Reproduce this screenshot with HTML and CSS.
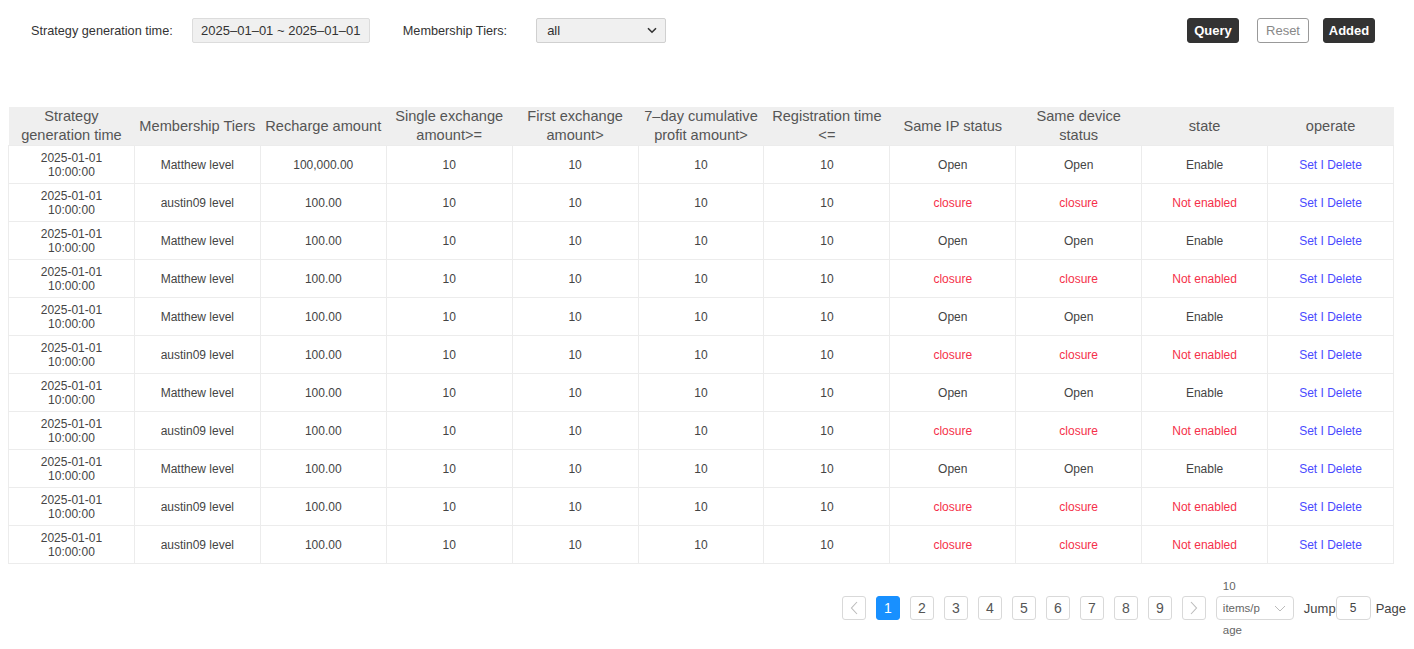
FILE: index.html
```html
<!DOCTYPE html>
<html>
<head>
<meta charset="utf-8">
<link rel="stylesheet" href="styles.css">
</head>
<body>
<div class="toolbar">
  <div class="filters">
    <span class="label first">Strategy generation time:</span>
    <div class="date-input">2025–01–01 ~ 2025–01–01</div>
    <span class="label second">Membership Tiers:</span>
    <div class="select">
      <span>all</span>
      <svg width="10" height="7" viewBox="0 0 10 7"><path d="M1 1.2 L5 5.2 L9 1.2" fill="none" stroke="#333" stroke-width="1.6"/></svg>
    </div>
  </div>
  <div class="actions">
    <button class="btn dark">Query</button>
    <button class="btn light">Reset</button>
    <button class="btn dark added">Added</button>
  </div>
</div>

<table class="grid">
  <thead>
    <tr>
      <th>Strategy<br>generation time</th>
      <th>Membership Tiers</th>
      <th>Recharge amount</th>
      <th>Single exchange<br>amount&gt;=</th>
      <th>First exchange<br>amount&gt;</th>
      <th>7–day cumulative<br>profit amount&gt;</th>
      <th>Registration time<br>&lt;=</th>
      <th>Same IP status</th>
      <th>Same device<br>status</th>
      <th>state</th>
      <th>operate</th>
    </tr>
  </thead>
  <tbody>
    <tr><td>2025-01-01<br>10:00:00</td><td>Matthew level</td><td>100,000.00</td><td>10</td><td>10</td><td>10</td><td>10</td><td>Open</td><td>Open</td><td>Enable</td><td class="op">Set I Delete</td></tr>
    <tr><td>2025-01-01<br>10:00:00</td><td>austin09 level</td><td>100.00</td><td>10</td><td>10</td><td>10</td><td>10</td><td class="red">closure</td><td class="red">closure</td><td class="red">Not enabled</td><td class="op">Set I Delete</td></tr>
    <tr><td>2025-01-01<br>10:00:00</td><td>Matthew level</td><td>100.00</td><td>10</td><td>10</td><td>10</td><td>10</td><td>Open</td><td>Open</td><td>Enable</td><td class="op">Set I Delete</td></tr>
    <tr><td>2025-01-01<br>10:00:00</td><td>Matthew level</td><td>100.00</td><td>10</td><td>10</td><td>10</td><td>10</td><td class="red">closure</td><td class="red">closure</td><td class="red">Not enabled</td><td class="op">Set I Delete</td></tr>
    <tr><td>2025-01-01<br>10:00:00</td><td>Matthew level</td><td>100.00</td><td>10</td><td>10</td><td>10</td><td>10</td><td>Open</td><td>Open</td><td>Enable</td><td class="op">Set I Delete</td></tr>
    <tr><td>2025-01-01<br>10:00:00</td><td>austin09 level</td><td>100.00</td><td>10</td><td>10</td><td>10</td><td>10</td><td class="red">closure</td><td class="red">closure</td><td class="red">Not enabled</td><td class="op">Set I Delete</td></tr>
    <tr><td>2025-01-01<br>10:00:00</td><td>Matthew level</td><td>100.00</td><td>10</td><td>10</td><td>10</td><td>10</td><td>Open</td><td>Open</td><td>Enable</td><td class="op">Set I Delete</td></tr>
    <tr><td>2025-01-01<br>10:00:00</td><td>austin09 level</td><td>100.00</td><td>10</td><td>10</td><td>10</td><td>10</td><td class="red">closure</td><td class="red">closure</td><td class="red">Not enabled</td><td class="op">Set I Delete</td></tr>
    <tr><td>2025-01-01<br>10:00:00</td><td>Matthew level</td><td>100.00</td><td>10</td><td>10</td><td>10</td><td>10</td><td>Open</td><td>Open</td><td>Enable</td><td class="op">Set I Delete</td></tr>
    <tr><td>2025-01-01<br>10:00:00</td><td>austin09 level</td><td>100.00</td><td>10</td><td>10</td><td>10</td><td>10</td><td class="red">closure</td><td class="red">closure</td><td class="red">Not enabled</td><td class="op">Set I Delete</td></tr>
    <tr><td>2025-01-01<br>10:00:00</td><td>austin09 level</td><td>100.00</td><td>10</td><td>10</td><td>10</td><td>10</td><td class="red">closure</td><td class="red">closure</td><td class="red">Not enabled</td><td class="op">Set I Delete</td></tr>
  </tbody>
</table>

<div class="pager">
  <div class="pg arrow"><svg width="8" height="14" viewBox="0 0 8 14"><path d="M7 1 L1.5 7 L7 13" fill="none" stroke="#bbb" stroke-width="1.1"/></svg></div>
  <div class="pg active">1</div>
  <div class="pg">2</div>
  <div class="pg">3</div>
  <div class="pg">4</div>
  <div class="pg">5</div>
  <div class="pg">6</div>
  <div class="pg">7</div>
  <div class="pg">8</div>
  <div class="pg">9</div>
  <div class="pg arrow"><svg width="8" height="14" viewBox="0 0 8 14"><path d="M1 1 L6.5 7 L1 13" fill="none" stroke="#bbb" stroke-width="1.1"/></svg></div>
  <div class="size">
    <span class="size-text">10 items/page</span>
    <svg class="size-arrow" width="12" height="7" viewBox="0 0 12 7"><path d="M1 1 L6 6 L11 1" fill="none" stroke="#bbb" stroke-width="1"/></svg>
  </div>
  <span class="jump">Jump</span>
  <div class="jump-input">5</div>
  <span class="page-word">Page</span>
</div>
</body>
</html>
```

FILE: styles.css
```css
html, body {
  margin: 0;
  padding: 0;
  background: #fff;
}
body {
  margin: 8px;
  padding-bottom: 30px;
  font-family: "Liberation Sans", Arial, sans-serif;
  color: #333;
}
.toolbar {
  display: flex;
  justify-content: space-between;
  align-items: center;
  padding: 10px 31px 0 23px;
  height: 25px;
}
.filters {
  display: flex;
  align-items: center;
}
.label {
  font-size: 12.7px;
  color: #333;
}
.date-input {
  margin-left: 19px;
  width: 176px;
  height: 23px;
  border: 1px solid #dcdcdc;
  background: #f0f0f0;
  border-radius: 2px;
  font-size: 13px;
  color: #333;
  display: flex;
  align-items: center;
  justify-content: center;
}
.label.second {
  margin-left: 33px;
}
.select {
  margin-left: 29px;
  height: 23px;
  border: 1px solid #d0d0d0;
  background: #f0f0f0;
  border-radius: 2px;
  font-size: 13px;
  display: flex;
  align-items: center;
  justify-content: space-between;
  padding: 0 8px 0 10px;
  width: 110px;
}
.actions {
  display: flex;
  align-items: center;
}
.btn {
  height: 25px;
  width: 52px;
  border-radius: 3px;
  font-family: "Liberation Sans", Arial, sans-serif;
  font-size: 13px;
  padding: 0;
  cursor: pointer;
}
.btn.dark {
  background: #333;
  color: #fff;
  border: 1px solid #333;
  font-weight: bold;
}
.btn.light {
  background: #fff;
  color: #888;
  border: 1px solid #999;
  margin-left: 18px;
}
.btn.added {
  margin-left: 14px;
}
.grid {
  margin-top: 64px;
  border-collapse: collapse;
  table-layout: fixed;
  width: 1386px;
}
.grid th {
  background: #efefef;
  font-weight: normal;
  font-size: 14.6px;
  line-height: 19px;
  color: #555;
  height: 38px;
  padding: 0;
  text-align: center;
  border: none;
}
.grid td {
  border: 1px solid #ececec;
  height: 37px;
  padding: 0;
  font-size: 12px;
  line-height: 14px;
  color: #444;
  text-align: center;
}
.grid td.red {
  color: #f5304a;
}
.grid td.op {
  color: #4a4aff;
}
.pager {
  margin-top: 32px;
  display: flex;
  justify-content: flex-end;
  align-items: center;
  height: 24px;
  gap: 10px;
}
.pg {
  width: 22px;
  height: 22px;
  border: 1px solid #d9d9d9;
  border-radius: 3px;
  display: flex;
  align-items: center;
  justify-content: center;
  font-size: 14px;
  color: #555;
}
.pg.active {
  background: #1890ff;
  border-color: #1890ff;
  color: #fff;
}
.size {
  position: relative;
  width: 63px;
  height: 22px;
  border: 1px solid #d9d9d9;
  border-radius: 4px;
  padding: 0 7px 0 6px;
}
.size-text {
  position: absolute;
  left: 6px;
  top: -22px;
  display: block;
  width: 42px;
  font-size: 11.5px;
  line-height: 22px;
  color: #666;
  overflow-wrap: break-word;
  white-space: normal;
}
.size-arrow {
  position: absolute;
  right: 7px;
  top: 8px;
}
.jump {
  font-size: 13px;
  color: #444;
}
.jump-input {
  margin-left: -10px;
  width: 33px;
  height: 22px;
  border: 1px solid #d9d9d9;
  border-radius: 4px;
  display: flex;
  align-items: center;
  justify-content: center;
  font-size: 12px;
  color: #444;
}
.page-word {
  margin-left: -5px;
  font-size: 13px;
  color: #444;
}
```
